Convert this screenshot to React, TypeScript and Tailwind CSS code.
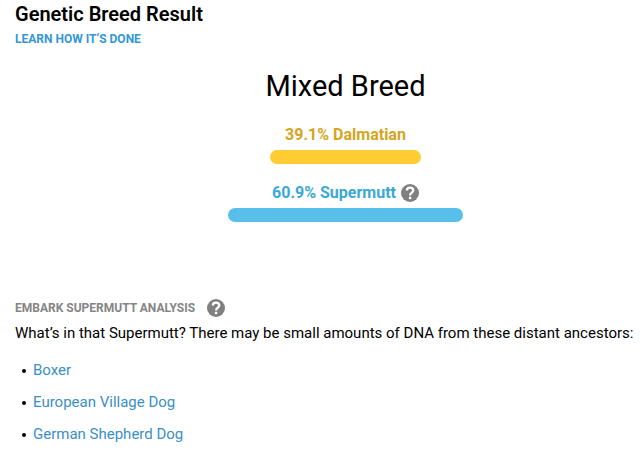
const breeds = [
  { name: 'Dalmatian', percent: 39.1, text: 'text-[#d5a520]', bar: 'bg-[#ffcc33]', hasHelp: false },
  { name: 'Supermutt', percent: 60.9, text: 'text-[#3ba9d6]', bar: 'bg-[#57bfe9]', hasHelp: true },
];

const ancestors = ['Boxer', 'European Village Dog', 'German Shepherd Dog'];

function HelpButton({ label }: { label: string }) {
  return (
    <button type="button" aria-label={label} className="shrink-0 text-[#808080]">
      <svg viewBox="0 0 24 24" className="size-[18px]" aria-hidden="true">
        <circle cx="12" cy="12" r="12" fill="currentColor" />
        <path
          d="M7.8 8.8C7.8 6.4 9.5 4.9 12 4.9s4.3 1.5 4.3 3.7c0 3-4.2 3.1-4.2 6.6"
          fill="none"
          stroke="white"
          strokeWidth="3"
        />
        <path d="M10.5 17h3.2v3.2h-3.2z" fill="white" />
      </svg>
    </button>
  );
}

export default function App() {
  return (
    <main className="bg-white pl-[15px] font-[Roboto,sans-serif] text-black">
      <header>
        <h1 className="pt-0.5 text-[20px] leading-6 font-semibold">Genetic Breed Result</h1>
        <a href="#how" className="mt-[5px] block text-[12px] leading-4 font-bold text-[#3597d6]">
          LEARN HOW IT’S DONE
        </a>
      </header>

      <section className="flex flex-col items-center pt-[19px] pl-9">
        <h2 className="text-[29px] leading-10">Mixed Breed</h2>
        <ul className="mt-4 flex w-[386px] flex-col gap-4">
          {breeds.map((breed) => (
            <li key={breed.name} className="flex flex-col items-center gap-1">
              <div className="flex h-6 items-center gap-[5px] pt-0.5">
                <span className={`text-[16px] leading-5 font-bold ${breed.text}`}>
                  {breed.percent}% {breed.name}
                </span>
                {breed.hasHelp && <HelpButton label={`About ${breed.name}`} />}
              </div>
              <div
                className={`h-3.5 rounded-full ${breed.bar}`}
                style={{ width: `${breed.percent}%` }}
              />
            </li>
          ))}
        </ul>
      </section>

      <section className="pt-[76px]">
        <div className="flex items-center gap-3">
          <h3 className="text-[12px] leading-5 font-bold text-[#858585]">EMBARK SUPERMUTT ANALYSIS</h3>
          <HelpButton label="About Supermutt analysis" />
        </div>
        <p className="mt-[3px] text-[15px] leading-6 whitespace-nowrap">
          What’s in that Supermutt? There may be small amounts of DNA from these distant ancestors:
        </p>
        <ul className="mt-[13px] flex flex-col gap-2">
          {ancestors.map((name) => (
            <li key={name} className="flex items-center gap-[7px] pl-[7px] text-[15px] leading-6">
              <span className="mt-0.5 size-1 rounded-full bg-black" />
              <a href="#breed" className="text-[#3b8fc4]">
                {name}
              </a>
            </li>
          ))}
        </ul>
      </section>
    </main>
  );
}
